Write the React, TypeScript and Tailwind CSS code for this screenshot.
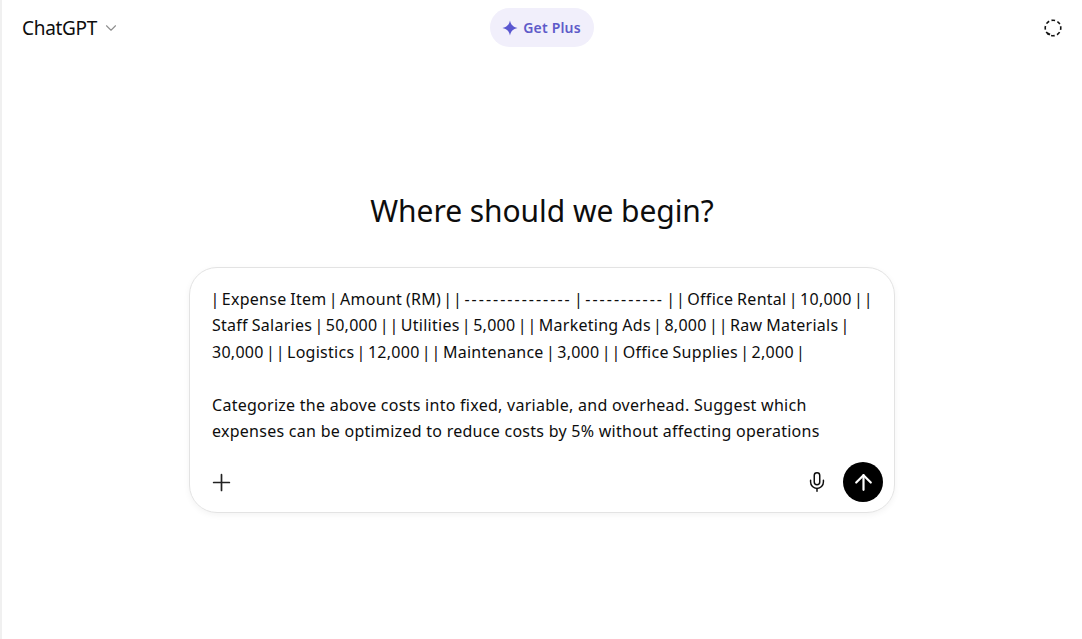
import { ChevronDown, Mic, Plus, ArrowUp } from "lucide-react";

// pipes sit tighter and dashes wider than they do in Noto Sans
const TableLine = ({ text }: { text: string }) => (
  <p className="[word-spacing:-0.6px]">
    {text.split(/(\||-+)/).map((part, i) => {
      if (part === "|") {
        return (
          <span key={i} className="mx-[-1.6px]">
            |
          </span>
        );
      }
      if (part.startsWith("-")) {
        return (
          <span key={i} className="tracking-[2px]">
            {part}
          </span>
        );
      }
      return <span key={i}>{part}</span>;
    })}
  </p>
);

const App = () => {
  return (
    <div className="flex h-[639px] w-[1082px] flex-col overflow-hidden border-l-2 border-[#f0f0f0] bg-white font-['Noto_Sans',sans-serif] text-[#0d0d0d]">
      <header className="flex h-[55px] items-center justify-between pl-[20px] pr-[19px]">
        <div className="flex w-[198px] items-center gap-[5px] pt-[1px]">
          <span className="text-[19px] tracking-[-0.3px]">ChatGPT</span>
          <ChevronDown className="h-[18px] w-[18px] text-[#8f8f8f]" strokeWidth={1.5} />
        </div>
        <div className="flex h-[39px] w-[104px] items-center justify-center gap-[5px] rounded-full bg-[#f1effb] text-[14px] font-semibold tracking-[0.2px] text-[#5e5bc9]">
          <svg viewBox="0 0 16 16" className="h-[16px] w-[16px]" fill="#5a57d0">
            <path d="M8 0.5 C8.8 4.6 11 6.9 15.5 8 C11 9.1 8.8 11.4 8 15.5 C7.2 11.4 5 9.1 0.5 8 C5 6.9 7.2 4.6 8 0.5 Z" />
          </svg>
          <span>Get Plus</span>
        </div>
        <div className="flex w-[200px] justify-end pt-[1px]">
          <svg viewBox="0 0 20 20" className="h-[20px] w-[20px]" fill="none" stroke="#111" strokeWidth={1.6}>
            <circle cx="10" cy="10" r="7.8" strokeDasharray="3.6 2.53" transform="rotate(-13 10 10)" />
            <path d="M4.2 15.2 L7 16.6" strokeWidth={2} />
          </svg>
        </div>
      </header>
      <main className="flex flex-col items-center pt-[136px]">
        <h1 className="text-[30px] leading-[40px] tracking-[-0.06px]">Where should we begin?</h1>
        <div className="mt-[36px] flex h-[246px] w-[706px] flex-col rounded-[28px] border border-[#e3e3e3] shadow-[0_2px_6px_rgba(0,0,0,0.05)]">
          <div className="whitespace-nowrap px-[22px] pt-[18px] text-[16px] leading-[26.4px] tracking-[0.27px]">
            <TableLine text="| Expense Item | Amount (RM) | | --------------- | ----------- | | Office Rental | 10,000 | |" />
            <TableLine text="Staff Salaries | 50,000 | | Utilities | 5,000 | | Marketing Ads | 8,000 | | Raw Materials |" />
            <TableLine text="30,000 | | Logistics | 12,000 | | Maintenance | 3,000 | | Office Supplies | 2,000 |" />
            <p className="mt-[26.4px]">Categorize the above costs into fixed, variable, and overhead. Suggest which</p>
            <p>expenses can be optimized to reduce costs by 5% without affecting operations</p>
          </div>
          <div className="mt-auto flex items-center justify-between pb-[10px] pl-[18px] pr-[11px]">
            <Plus className="h-[27px] w-[27px] text-[#222]" strokeWidth={1.5} />
            <div className="flex items-center gap-[15px]">
              <Mic className="h-[22px] w-[22px]" strokeWidth={1.6} />
              <div className="flex h-[40px] w-[40px] items-center justify-center rounded-full bg-black">
                <ArrowUp className="h-[25px] w-[25px] text-white" strokeWidth={2.1} />
              </div>
            </div>
          </div>
        </div>
      </main>
    </div>
  );
};

export default App;
